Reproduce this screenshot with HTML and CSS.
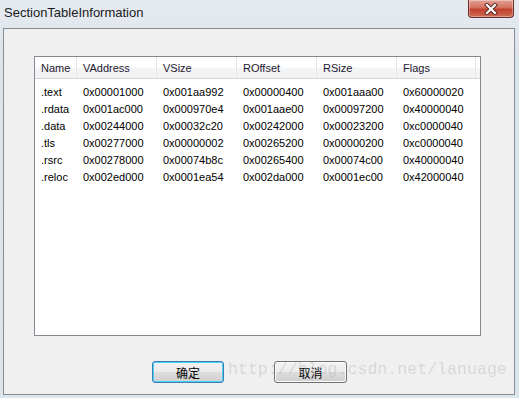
FILE: index.html
```html
<!DOCTYPE html>
<html lang="en">
<head>
  <meta charset="UTF-8" />
  <title>SectionTableInformation</title>
  <link rel="stylesheet" href="styles.css">
</head>
<body>
  <div class="window">
    <div class="titlebar">
      <span class="title">SectionTableInformation</span>
      <button class="close-btn">
        <svg width="14" height="12" viewBox="0 0 14 12">
          <path d="M3 2 L11 10 M11 2 L3 10" stroke="#5a2020" stroke-width="4" stroke-linecap="square"/>
          <path d="M3 2 L11 10 M11 2 L3 10" stroke="#fff" stroke-width="2.2" stroke-linecap="square"/>
        </svg>
      </button>
    </div>
    <div class="client">
      <div class="list">
        <div class="row head">
          <div>Name</div><div>VAddress</div><div>VSize</div><div>ROffset</div><div>RSize</div><div>Flags</div><div></div>
        </div>
        <div class="body">
          <div class="row"><div>.text</div><div>0x00001000</div><div>0x001aa992</div><div>0x00000400</div><div>0x001aaa00</div><div>0x60000020</div></div>
          <div class="row"><div>.rdata</div><div>0x001ac000</div><div>0x000970e4</div><div>0x001aae00</div><div>0x00097200</div><div>0x40000040</div></div>
          <div class="row"><div>.data</div><div>0x00244000</div><div>0x00032c20</div><div>0x00242000</div><div>0x00023200</div><div>0xc0000040</div></div>
          <div class="row"><div>.tls</div><div>0x00277000</div><div>0x00000002</div><div>0x00265200</div><div>0x00000200</div><div>0xc0000040</div></div>
          <div class="row"><div>.rsrc</div><div>0x00278000</div><div>0x00074b8c</div><div>0x00265400</div><div>0x00074c00</div><div>0x40000040</div></div>
          <div class="row"><div>.reloc</div><div>0x002ed000</div><div>0x0001ea54</div><div>0x002da000</div><div>0x0001ec00</div><div>0x42000040</div></div>
        </div>
      </div>
      <div class="buttons">
        <button class="btn default">确定</button>
        <button class="btn">取消</button>
      </div>
      <div class="watermark">http://blog.csdn.net/lanuage</div>
    </div>
  </div>
</body>
</html>
```

FILE: styles.css
```css
* { margin: 0; padding: 0; box-sizing: border-box; }
body {
  font-family: 'Liberation Sans', Arial, sans-serif;
  background: #dfe6ee;
}
.window {
  width: 519px;
  height: 398px;
  background: linear-gradient(to bottom, #e6ebf0, #dbe3eb 60px, #dce4ec);
  display: flex;
  flex-direction: column;
}
.titlebar {
  height: 28px;
  display: flex;
  justify-content: space-between;
  align-items: flex-start;
  padding: 0 5px 0 4px;
}
.title {
  font-size: 13px;
  color: #1a1a1a;
  margin-top: 5px;
}
.close-btn {
  width: 46px;
  height: 18px;
  border: 1px solid #6e2b27;
  border-top: none;
  border-radius: 0 0 4px 4px;
  background: linear-gradient(to bottom, #e3a294, #d2705f 45%, #c0412e 55%, #cf6b56);
  display: flex;
  align-items: center;
  justify-content: center;
  box-shadow: inset 0 0 0 1px rgba(255,255,255,0.35);
}
.client {
  position: relative;
  margin: 0 4px 3px 3px;
  flex: 1;
  background: #f0f0f0;
  border: 1px solid #888d94;
  padding: 27px 0 0 30px;
}
.list {
  width: 447px;
  height: 280px;
  background: #fff;
  border: 1px solid #828790;
  font-size: 11px;
  color: #000;
}
.row {
  display: grid;
  grid-template-columns: 42px 80px 80px 80px 80px 79px 1fr;
  height: 17px;
  align-items: center;
}
.row > div { padding-left: 6px; white-space: nowrap; }
.head {
  height: 22px;
  background: linear-gradient(to bottom, #ffffff, #ffffff 45%, #f3f4f6 55%, #f1f2f4);
  border-bottom: 1px solid #d5d5d5;
  color: #1e2030;
}
.head > div {
  height: 100%;
  display: flex;
  align-items: center;
  border-right: 1px solid #e3e5e8;
}
.head > div:last-child { border-right: none; }
.body { padding-top: 4px; }
.buttons {
  display: flex;
  gap: 50px;
  padding-left: 118px;
  margin-top: 25px;
}
.btn {
  width: 73px;
  height: 22px;
  font-family: 'Noto Sans CJK SC', sans-serif;
  font-size: 12px;
  color: #000;
  border: 1px solid #707070;
  border-radius: 3px;
  background: linear-gradient(to bottom, #f2f2f2, #ebebeb 50%, #dddddd 50%, #cfcfcf);
  box-shadow: inset 0 0 0 1px #fcfcfc;
}
.btn.default {
  width: 72px;
  border-color: #3c7fb1;
  box-shadow: inset 0 0 0 1px #48d0f6;
}
.watermark {
  position: absolute;
  left: 224px;
  top: 331px;
  font-family: 'Liberation Mono', monospace;
  font-size: 16.6px;
  color: rgba(170, 170, 170, 0.35);
  pointer-events: none;
}
```
